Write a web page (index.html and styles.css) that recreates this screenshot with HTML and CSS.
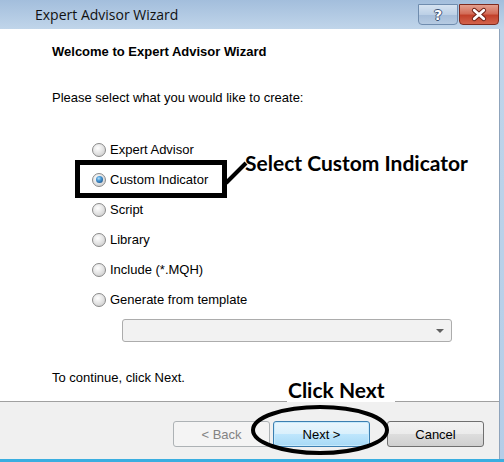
FILE: index.html
```html
<!DOCTYPE html>
<html>
<head>
<meta charset="utf-8">
<link rel="stylesheet" href="styles.css">
</head>
<body>
<div class="window">
  <div class="titlebar">
    <span class="title">Expert Advisor Wizard</span>
    <div class="caption-btns">
      <div class="cap-btn help"><span>?</span></div>
      <div class="cap-btn close">
        <svg width="40" height="21" viewBox="0 0 40 21">
          <path d="M15 6 L25 15 M25 6 L15 15" stroke="#6b1f14" stroke-width="5" stroke-linecap="round" fill="none"/>
          <path d="M15 6 L25 15 M25 6 L15 15" stroke="#ffffff" stroke-width="3" stroke-linecap="round" fill="none"/>
        </svg>
      </div>
    </div>
  </div>
  <div class="body">
    <div class="pane">
      <div class="client">
        <h1 class="heading">Welcome to Expert Advisor Wizard</h1>
        <p class="prompt">Please select what you would like to create:</p>
        <ul class="options">
          <li class="option"><span class="radio"></span>Expert Advisor</li>
          <li class="option"><span class="radio checked"></span>Custom Indicator</li>
          <li class="option"><span class="radio"></span>Script</li>
          <li class="option"><span class="radio"></span>Library</li>
          <li class="option"><span class="radio"></span>Include (*.MQH)</li>
          <li class="option"><span class="radio"></span>Generate from template</li>
        </ul>
        <div class="combo"><span class="arrow"></span></div>
        <p class="hint">To continue, click Next.</p>
      </div>
      <div class="footer">
        <button class="btn btn-disabled">&lt; Back</button>
        <button class="btn btn-default">Next &gt;</button>
        <button class="btn btn-cancel">Cancel</button>
      </div>
    </div>
    <div class="frame-right"></div>
  </div>

  <svg class="annot" width="504" height="462" viewBox="0 0 504 462">
    <rect x="77.5" y="162.5" width="147" height="33" fill="none" stroke="#000" stroke-width="5"/>
    <path d="M226 183 L246 163" stroke="#000" stroke-width="4" fill="none"/>
    <ellipse cx="320" cy="430" rx="67" ry="23" fill="none" stroke="#000" stroke-width="4"/>
  </svg>
  <div class="label label-select">Select Custom Indicator</div>
  <div class="label label-next">Click Next</div>
</div>
</body>
</html>
```

FILE: styles.css
```css
* { box-sizing: border-box; }
html, body { margin: 0; padding: 0; }
body {
  width: 504px;
  height: 462px;
  overflow: hidden;
  background: #ffffff;
  font-family: "Liberation Sans", Arial, sans-serif;
}
.window {
  position: relative;
  width: 504px;
  height: 462px;
  display: flex;
  flex-direction: column;
  border-bottom: 3px solid #3aaee0;
}
.titlebar {
  height: 29px;
  flex: none;
  display: flex;
  align-items: flex-start;
  background: linear-gradient(#a3bedc, #c0d5ea);
}
.title {
  padding-left: 35px;
  padding-top: 1px;
  font-family: "Open Sans", "Noto Sans", sans-serif;
  font-size: 14px;
  line-height: 28px;
  color: #111;
}
.caption-btns {
  margin-left: auto;
  margin-top: 4px;
  margin-right: 5px;
  display: flex;
  gap: 1px;
}
.cap-btn {
  width: 40px;
  height: 21px;
  border-radius: 0 0 4px 4px;
  display: flex;
  align-items: center;
  justify-content: center;
}
.help {
  border: 1px solid #6f8cae;
  background: linear-gradient(#d6e3f1 0%, #bcd0e6 50%, #a5bdd9 51%, #b6cbe2 100%);
}
.help span {
  font-family: "DejaVu Sans", sans-serif;
  font-weight: bold;
  font-size: 14px;
  line-height: 1;
  color: #ffffff;
  text-shadow: 1px 0 0 #3d5577, -1px 0 0 #3d5577, 0 1px 0 #3d5577, 0 -1px 0 #3d5577;
}
.close {
  border: 1px solid #7d2a1e;
  background: linear-gradient(#e3a08f 0%, #d36d59 45%, #c2412b 55%, #d3634c 100%);
}
.body {
  flex: 1;
  display: flex;
  min-height: 0;
}
.pane {
  width: 500px;
  display: flex;
  flex-direction: column;
  border-right: 1px solid #8fa4bc;
}
.frame-right {
  width: 4px;
  background: linear-gradient(#c0d5ea, #b5cde8);
}
.client {
  height: 372px;
  flex: none;
  padding: 15px 0 0 52px;
  background: #ffffff;
  font-size: 13px;
  line-height: 15px;
  color: #000;
}
.heading {
  margin: 0;
  font-size: 13px;
  font-weight: bold;
  line-height: 15px;
}
.prompt {
  margin: 31px 0 0;
}
.options {
  list-style: none;
  margin: 37px 0 0;
  padding: 0 0 0 40px;
  display: flex;
  flex-direction: column;
  gap: 15px;
}
.option {
  display: flex;
  align-items: center;
  height: 15px;
}
.radio {
  position: relative;
  width: 14px;
  height: 14px;
  margin-right: 4px;
  border-radius: 50%;
  border: 1px solid #8a8a8a;
  background: radial-gradient(circle at 40% 35%, #ffffff 0%, #e6e6e6 45%, #c4c4c4 100%);
  flex: none;
}
.radio.checked::after {
  content: "";
  position: absolute;
  left: 2.5px;
  top: 2.5px;
  width: 7px;
  height: 7px;
  border-radius: 50%;
  background: radial-gradient(circle at 40% 35%, #b7e2fb 0%, #4a9ad6 35%, #1d5a94 80%, #163f6b 100%);
}
.combo {
  position: relative;
  margin: 12px 0 0 70px;
  width: 330px;
  height: 23px;
  border: 1px solid #acacac;
  border-radius: 3px;
  background: #f2f2f2;
}
.arrow {
  position: absolute;
  right: 7px;
  top: 9px;
  width: 0;
  height: 0;
  border-left: 4px solid transparent;
  border-right: 4px solid transparent;
  border-top: 4px solid #606060;
}
.hint {
  margin: 28px 0 0;
}
.footer {
  flex: 1;
  border-top: 1px solid #a0a0a0;
  background: #f0f0f0;
  display: flex;
  justify-content: flex-end;
  align-items: flex-start;
  padding: 19px 15px 0 0;
}
.btn {
  width: 97px;
  height: 26px;
  padding: 0;
  font-family: "Liberation Sans", Arial, sans-serif;
  font-size: 13px;
  color: #000;
  border: 1px solid #707070;
  border-radius: 3px;
  background: linear-gradient(#f2f2f2 0%, #ebebeb 50%, #dddddd 51%, #cfcfcf 100%);
}
.btn-disabled {
  margin-right: 3px;
  color: #838383;
  border-color: #adb2b5;
  background: #f4f4f4;
}
.btn-default {
  margin-right: 17px;
  border-color: #3c7fb1;
  background: linear-gradient(#eaf6fd 0%, #d9f0fc 50%, #bee6fd 51%, #a7d9f5 100%);
  box-shadow: inset 0 0 0 1px #c7eafc;
}
.annot {
  position: absolute;
  left: 0;
  top: 0;
  pointer-events: none;
}
.label {
  position: absolute;
  font-family: Lato, "Open Sans", sans-serif;
  font-weight: bold;
  font-size: 21px;
  line-height: 1;
  color: #000;
  white-space: nowrap;
}
.label-select {
  left: 245px;
  top: 152px;
}
.label-next {
  left: 287px;
  top: 378px;
  width: 108px;
  height: 24px;
  padding: 1px 0 0 1px;
  background: #ffffff;
}
```
